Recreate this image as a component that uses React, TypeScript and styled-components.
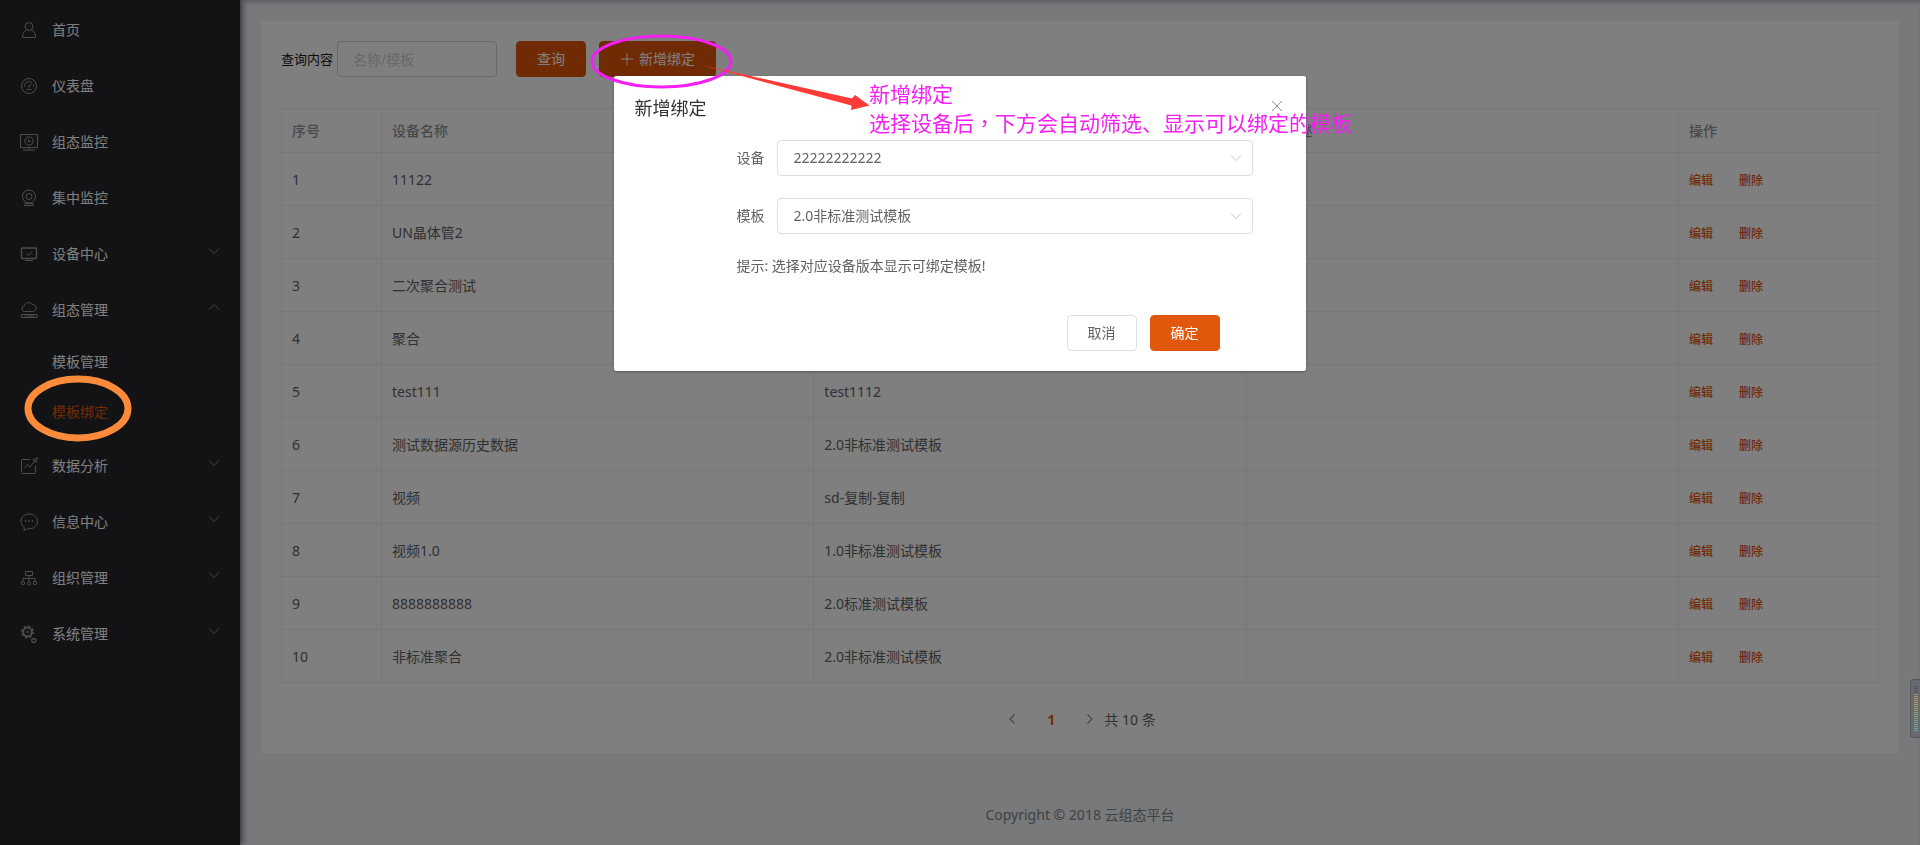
import React from 'react';
import styled, { createGlobalStyle } from 'styled-components';

const ORANGE = '#e1570b';

const GlobalStyle = createGlobalStyle`
  *, *::before, *::after { box-sizing: border-box; }
  body {
    margin: 0;
    background: #f0f2f5;
    color: #606266;
    font: 14px/20px "Noto Sans", "Noto Sans CJK SC", sans-serif;
  }
  button, input, select { font: inherit; }
  a { text-decoration: none; }
`;

/* ---------- layout ---------- */

const Page = styled.div`
  display: flex;
  min-height: 100vh;
`;

const Sidebar = styled.nav`
  position: relative;
  z-index: 1;
  flex: 0 0 240px;
  padding-top: 2px;
  background: #26262a;
  box-shadow: 2px 0 6px rgba(0, 10, 41, 0.6);
`;

const Main = styled.main`
  flex: 1;
  min-width: 0;
  display: flex;
  flex-direction: column;
  padding: 20px 20px 0;
  box-shadow: inset 0 4px 4px -2px rgba(0, 21, 41, 0.25);
`;

const Card = styled.section`
  background: #fff;
  border: 1px solid #ebeef5;
  padding: 20px;
`;

const Footer = styled.footer`
  padding: 50px 0 19px;
  text-align: center;
  color: #808488;
`;

/* ---------- sidebar menu ---------- */

const MenuList = styled.ul`
  list-style: none;
  margin: 0;
  padding: 0;
`;

const MenuLink = styled.a`
  display: flex;
  align-items: center;
  height: 56px;
  padding: 0 20px;
  color: #fff;
`;

const MenuIcon = styled.svg`
  width: 18px;
  height: 18px;
  margin-right: 14px;
  fill: none;
  stroke: #9a9ba0;
`;

const MenuArrow = styled.svg<{ $open?: boolean }>`
  width: 12px;
  height: 12px;
  margin: 0 0 6px auto;
  fill: none;
  stroke: #808286;
  transform: ${(p) => (p.$open ? 'rotate(180deg)' : 'none')};
`;

const SubLink = styled.a<{ $active?: boolean }>`
  display: flex;
  align-items: center;
  height: 50px;
  padding: 0 0 2px 52px;
  color: ${(p) => (p.$active ? ORANGE : '#fff')};
`;

/* ---------- form parts ---------- */

const Toolbar = styled.form`
  display: flex;
  align-items: center;
  margin-bottom: 31px;
`;

const SearchLabel = styled.label`
  margin-right: 4px;
  font-size: 13px;
  color: #1a1a1a;
`;

const SearchInput = styled.input`
  width: 160px;
  height: 36px;
  margin-right: 19px;
  padding: 0 15px;
  border: 1px solid #d0d3da;
  border-radius: 4px;
  background: #fff;
  color: #606266;
  outline: none;
  &::placeholder { color: #ccd0d6; }
`;

const Button = styled.button<{ $primary?: boolean }>`
  display: inline-flex;
  align-items: center;
  justify-content: center;
  gap: 5px;
  min-width: 70px;
  height: 36px;
  padding: 0 20px;
  border: 1px solid ${(p) => (p.$primary ? ORANGE : '#dcdfe6')};
  border-radius: 4px;
  background: ${(p) => (p.$primary ? ORANGE : '#fff')};
  color: ${(p) => (p.$primary ? '#fff' : '#606266')};
  cursor: pointer;
  & + & { margin-left: 13px; }
`;

const PlusIcon = styled.svg`
  width: 14px;
  height: 14px;
  stroke: currentColor;
`;

/* ---------- table ---------- */

const Table = styled.table`
  width: 100%;
  table-layout: fixed;
  border-collapse: collapse;
`;

const Th = styled.th`
  height: 44px;
  padding: 0 10px;
  border: 1px solid #ebeef5;
  text-align: left;
  font-weight: 500;
  color: #909399;
`;

const Td = styled.td`
  height: 53px;
  padding: 2px 10px 0;
  border: 1px solid #ebeef5;
`;

const RowAction = styled.button`
  margin-right: 26px;
  padding: 0;
  border: 0;
  background: none;
  font-size: 12px;
  font-weight: 500;
  color: ${ORANGE};
  cursor: pointer;
`;

const Pagination = styled.nav`
  display: flex;
  align-items: center;
  justify-content: center;
  height: 28px;
  margin-top: 23px;
  padding-right: 6px;
`;

const PageArrow = styled.button`
  display: flex;
  align-items: center;
  padding: 0 8px;
  border: 0;
  background: none;
  color: #909399;
  svg { width: 12px; height: 12px; margin-bottom: 2px; fill: none; stroke: currentColor; stroke-width: 1.3; }
`;

const PageNumber = styled.button`
  width: 50px;
  padding: 0;
  border: 0;
  background: none;
  font-weight: 700;
  color: ${ORANGE};
`;

/* ---------- dialog ---------- */

const Overlay = styled.div`
  position: fixed;
  inset: 0;
  z-index: 10;
  background: rgba(0, 0, 0, 0.5);
`;

const Dialog = styled.section`
  width: 36%;
  margin: 9vh auto 0;
  border-radius: 2px;
  background: #fff;
  box-shadow: 0 1px 3px rgba(0, 0, 0, 0.3);
`;

const DialogHeader = styled.header`
  display: flex;
  align-items: center;
  justify-content: space-between;
  padding: 20px 23px 20px 20px;
`;

const DialogTitle = styled.h2`
  margin: 0;
  font-size: 18px;
  line-height: 24px;
  font-weight: 400;
  color: #303133;
`;

const CloseButton = styled.button`
  display: flex;
  padding: 0 0 4px;
  border: 0;
  background: none;
  color: #909399;
  svg { width: 12px; height: 12px; stroke: currentColor; }
`;

const DialogBody = styled.div`
  display: flex;
  flex-direction: column;
  gap: 22px;
  padding: 0 53px 0 122px;
`;

const Field = styled.div`
  display: flex;
  align-items: center;
  gap: 13px;
`;

const SelectBox = styled.div`
  position: relative;
  flex: 1;
  svg {
    position: absolute;
    right: 11px;
    top: 12px;
    width: 12px;
    height: 12px;
    fill: none;
    stroke: #c0c4cc;
    pointer-events: none;
  }
`;

const Select = styled.select`
  appearance: none;
  display: block;
  width: 100%;
  height: 36px;
  padding: 0 30px 0 15px;
  border: 1px solid #dcdfe6;
  border-radius: 4px;
  background: #fff;
  color: #606266;
  outline: none;
`;

const Tip = styled.p`
  margin: 0;
`;

const DialogFooter = styled.footer`
  display: flex;
  justify-content: flex-end;
  padding: 39px 86px 20px;
`;

/* ---------- annotations and floating meter ---------- */

const Marks = styled.svg`
  position: absolute;
  top: 0;
  left: 0;
  z-index: 20;
  width: 900px;
  height: 460px;
  pointer-events: none;
`;

const Note = styled.p`
  position: absolute;
  top: 80px;
  left: 869px;
  z-index: 20;
  margin: 0;
  font-size: 21px;
  line-height: 29px;
  white-space: nowrap;
  color: #f31ff3;
`;

/* The Traditional Chinese face centres the comma in its box. */
const CentredComma = styled.span`
  font-family: "Noto Sans CJK TC", sans-serif;
  line-height: 1;
`;

const Meter = styled.div`
  position: fixed;
  right: 0;
  bottom: 107px;
  z-index: 20;
  width: 10px;
  height: 59px;
  padding: 6px 2px 6px 3px;
  border: 1px solid #56575d;
  border-right: 0;
  border-radius: 4px 0 0 4px;
  background: #686a72;
`;

const MeterBars = styled.div`
  width: 4px;
  height: 45px;
  background:
    repeating-linear-gradient(to bottom, transparent 0 1px, #686a72 1px 2px),
    linear-gradient(to bottom, #565660 0 8px, #b8865f 8px, #b3a25f 16px, #9aa569 26px, #74a37e 36px, #62aaa2 45px);
`;

/* ---------- data ---------- */

type Item = { label: string; icon: React.ReactNode; children?: string[]; expandable?: boolean };

const menu: Item[] = [
  {
    label: '首页',
    icon: (<><circle cx="9" cy="5.5" r="4" /><path d="M6.5 9C3.8 10.3 2.5 12.6 2.5 16.5h13c0-3.900-1.300-6.200-4-7.500" /></>),
  },
  {
    label: '仪表盘',
    icon: (<><circle cx="9" cy="9" r="7.500" /><path d="M4.500 9.500a4.500 4.500 0 0 1 7-4.200M13.200 7.500l.5 2M9 9.500l2.500-3M6.500 12.500h5" /><circle cx="9" cy="9.500" r=".6" /></>),
  },
  {
    label: '组态监控',
    icon: (<><path d="M.5 1.500h17v13H.5zM9 14.500v2M3 17h12" /><circle cx="9" cy="8" r="4.200" /><path d="M8.500 6v2.500H11M8.500 8.500l-1 1" /></>),
  },
  {
    label: '集中监控',
    icon: (<><circle cx="9" cy="7.500" r="6.500" /><circle cx="9" cy="7.500" r="3" /><path d="M5.500 13.500l-1 3h9l-1-3M6 14.500h6" /></>),
  },
  {
    label: '设备中心',
    icon: (<><rect x="1.500" y="3" width="15" height="10.500" rx=".8" strokeWidth="1.300" /><path d="M6.500 8.500l2 2 3.500-4M5 15.500h8" /></>),
    expandable: true,
  },
  {
    label: '组态管理',
    icon: (<><path d="M4.500 10.500a2.800 2.800 0 0 1-.2-5.500c1-3.800 6.200-4.600 7.800-1.500 2.700.1 4 2 4 3.800a3.200 3.200 0 0 1-2.600 3.200zM1.500 13.500h15.500v3H1.500zM4 15h1M6.500 15h8" /></>),
    children: ['模板管理', '模板绑定'],
    expandable: true,
  },
  {
    label: '数据分析',
    icon: (<><path d="M10.500 2.500H2.200q-.7 0-.7.7v12.600q0 .7.700.7h12.600q.7 0 .7-.7V8.500" /><path d="M4.500 11l3-3.500L10 10l5.500-7M13 2.500l4.500-1.500-1.500 4.500z" /></>),
    expandable: true,
  },
  {
    label: '信息中心',
    icon: (<><path d="M4 17.300l.3-2.800C-1.500 10 .5 1 9 1c11 0 11.500 15 0 14.700-1.200 0-3 .8-5 1.600z" /><path d="M4.800 8h1.500M8.300 8h1.500M11.800 8h1.500" strokeWidth="1.600" /></>),
    expandable: true,
  },
  {
    label: '组织管理',
    icon: (<><path d="M5.500 2.500h7v4h-7zM9 6.500v6M3 12v-2.500h12V12" /><circle cx="3" cy="14" r="1.700" /><circle cx="9" cy="14.500" r="1.700" /><circle cx="15" cy="14" r="1.700" /></>),
    expandable: true,
  },
  {
    label: '系统管理',
    icon: (<><circle cx="7.500" cy="7" r="4.300" strokeWidth="1.800" /><circle cx="7.500" cy="7" r="5.800" strokeWidth="1.600" strokeDasharray="2.300 2.250" /><circle cx="7.500" cy="7" r=".8" /><circle cx="13.800" cy="15.500" r="2" strokeWidth="1.400" /></>),
    expandable: true,
  },
];

const rows = [
  ['11122', ''],
  ['UN晶体管2', ''],
  ['二次聚合测试', ''],
  ['聚合', ''],
  ['test111', 'test1112'],
  ['测试数据源历史数据', '2.0非标准测试模板'],
  ['视频', 'sd-复制-复制'],
  ['视频1.0', '1.0非标准测试模板'],
  ['8888888888', '2.0标准测试模板'],
  ['非标准聚合', '2.0非标准测试模板'],
];

const Chevron = () => <path d="M1 3.500l5 5 5-5" />;

export default function App() {
  return (
    <>
      <GlobalStyle />
      <Page>
        <Sidebar aria-label="主菜单">
          <MenuList>
            {menu.map((item) => (
              <li key={item.label}>
                <MenuLink href="#">
                  <MenuIcon viewBox="0 0 18 18" aria-hidden="true">{item.icon}</MenuIcon>
                  {item.label}
                  {item.expandable && (
                    <MenuArrow viewBox="0 0 12 12" $open={!!item.children} aria-hidden="true">
                      <Chevron />
                    </MenuArrow>
                  )}
                </MenuLink>
                {item.children && (
                  <MenuList>
                    {item.children.map((label) => (
                      <li key={label}>
                        <SubLink href="#" $active={label === '模板绑定'}>{label}</SubLink>
                      </li>
                    ))}
                  </MenuList>
                )}
              </li>
            ))}
          </MenuList>
        </Sidebar>

        <Main>
          <Card>
            <Toolbar>
              <SearchLabel htmlFor="keyword">查询内容</SearchLabel>
              <SearchInput id="keyword" placeholder="名称/模板" />
              <Button type="button" $primary>查询</Button>
              <Button type="button" $primary>
                <PlusIcon viewBox="0 0 14 14" aria-hidden="true"><path d="M7 1v12M1 7h12" /></PlusIcon>
                新增绑定
              </Button>
            </Toolbar>

            <Table>
              <colgroup>
                <col width="100" />
                <col />
                <col />
                <col />
                <col width="200" />
              </colgroup>
              <thead>
                <tr>
                  <Th>序号</Th>
                  <Th>设备名称</Th>
                  <Th>模板名称</Th>
                  <Th>模板描述</Th>
                  <Th>操作</Th>
                </tr>
              </thead>
              <tbody>
                {rows.map(([device, template], i) => (
                  <tr key={device}>
                    <Td>{i + 1}</Td>
                    <Td>{device}</Td>
                    <Td>{template}</Td>
                    <Td />
                    <Td>
                      <RowAction type="button">编辑</RowAction>
                      <RowAction type="button">删除</RowAction>
                    </Td>
                  </tr>
                ))}
              </tbody>
            </Table>

            <Pagination aria-label="分页">
              <PageArrow type="button" aria-label="上一页">
                <svg viewBox="0 0 12 12"><path d="M8.500 1.500L4 6l4.500 4.500" /></svg>
              </PageArrow>
              <PageNumber type="button">1</PageNumber>
              <PageArrow type="button" aria-label="下一页">
                <svg viewBox="0 0 12 12"><path d="M3.500 1.500L8 6l-4.500 4.500" /></svg>
              </PageArrow>
              <span>共 10 条</span>
            </Pagination>
          </Card>
          <Footer>Copyright © 2018 云组态平台</Footer>
        </Main>
      </Page>

      <Overlay>
        <Dialog role="dialog" aria-labelledby="dialog-title">
          <DialogHeader>
            <DialogTitle id="dialog-title">新增绑定</DialogTitle>
            <CloseButton type="button" aria-label="关闭">
              <svg viewBox="0 0 12 12"><path d="M1 1l10 10M11 1L1 11" /></svg>
            </CloseButton>
          </DialogHeader>
          <DialogBody>
            <Field>
              <label htmlFor="device">设备</label>
              <SelectBox>
                <Select id="device"><option>22222222222</option></Select>
                <svg viewBox="0 0 12 12" aria-hidden="true"><Chevron /></svg>
              </SelectBox>
            </Field>
            <Field>
              <label htmlFor="template">模板</label>
              <SelectBox>
                <Select id="template"><option>2.0非标准测试模板</option></Select>
                <svg viewBox="0 0 12 12" aria-hidden="true"><Chevron /></svg>
              </SelectBox>
            </Field>
            <Tip>提示: 选择对应设备版本显示可绑定模板!</Tip>
          </DialogBody>
          <DialogFooter>
            <Button type="button">取消</Button>
            <Button type="button" $primary>确定</Button>
          </DialogFooter>
        </Dialog>
      </Overlay>

      <Marks viewBox="0 0 900 460" aria-hidden="true">
        <ellipse cx="78" cy="408.500" rx="50" ry="29.500" fill="none" stroke="#fb8b3a" strokeWidth="7" />
        <ellipse cx="661.500" cy="61.500" rx="69.500" ry="25.500" fill="none" stroke="#f31ff3" strokeWidth="3" />
        <path d="M701 65l151 33.500 3-3.500 14.500 10.500L851 110l.5-4.500z" fill="#fe3b36" />
      </Marks>
      <Note>
        新增绑定
        <br />
        选择设备后<CentredComma>，</CentredComma>下方会自动筛选、显示可以绑定的模板
      </Note>

      <Meter aria-hidden="true">
        <MeterBars />
      </Meter>
    </>
  );
}
